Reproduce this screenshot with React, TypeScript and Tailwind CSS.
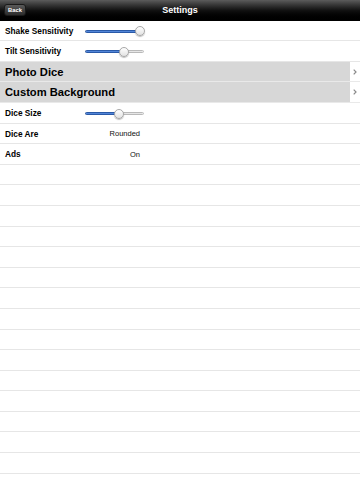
import type { ReactNode } from "react";

const font = { fontFamily: '"Liberation Sans", Arial, sans-serif' };

function Slider({ value }: { value: number }) {
  // value is the thumb centre in px from the track start (track is 59px wide)
  return (
    <div className="relative mt-[1px] h-[10px] w-[59px]">
      <div className="absolute left-0 right-0 top-[3.5px] h-[3px] rounded-full border border-[#b9b9b9] bg-gradient-to-b from-[#f4f4f4] to-[#d8d8d8]" />
      <div
        className="absolute left-0 top-[3.5px] h-[3px] rounded-full border border-[#2a5aa8] bg-gradient-to-b from-[#7ea8e6] to-[#2460c8]"
        style={{ width: value }}
      />
      <div
        className="absolute top-0 h-[10px] w-[10px] rounded-full border border-[#a8a8a8] bg-gradient-to-b from-white to-[#e2e2e2] shadow-[0_1px_1px_rgba(0,0,0,0.25)]"
        style={{ left: value - 5 }}
      />
    </div>
  );
}

function Row({ children }: { children?: ReactNode }) {
  return (
    <div className="flex h-[20.6px] shrink-0 items-center border-b border-[#e6e6e6] pt-[1px]">
      {children}
    </div>
  );
}

function Label({ children }: { children: ReactNode }) {
  return <div className="w-[85px] pl-[5px] text-[8.3px] font-bold text-black">{children}</div>;
}

function Value({ children }: { children: ReactNode }) {
  return <div className="w-[55px] text-right text-[7.5px] text-[#111]">{children}</div>;
}

function LinkRow({ title }: { title: string }) {
  return (
    <div className="flex h-[20.6px] shrink-0 items-stretch border-b border-[#e9e9e9]">
      <div className="flex flex-1 items-center bg-[#d7d7d7] pl-[5px] pt-[1px] text-[11.2px] font-bold text-black">
        {title}
      </div>
      <div className="flex w-[10px] items-center justify-center bg-white">
        <svg width="4" height="6" viewBox="0 0 4 6">
          <polyline points="0.7,0.7 3,3 0.7,5.3" fill="none" stroke="#8a8a8a" strokeWidth="1.2" />
        </svg>
      </div>
    </div>
  );
}

export default function App() {
  const empty = Array.from({ length: 16 });

  return (
    <div className="flex h-[480px] w-[360px] flex-col overflow-hidden bg-white" style={font}>
      {/* Nav bar */}
      <div className="relative flex h-[20.6px] shrink-0 items-center justify-center bg-gradient-to-b from-[#5c5c5c] via-[#111] via-50% to-black">
        <button className="absolute left-[4px] top-[4px] flex h-[12px] w-[22px] items-center justify-center rounded-[3px] border border-[#1a1a1a] bg-gradient-to-b from-[#5a5a5a] to-[#2c2c2c] text-[5.8px] font-bold text-white">
          Back
        </button>
        <span className="text-[9px] font-bold text-white">Settings</span>
      </div>

      <Row>
        <Label>Shake Sensitivity</Label>
        <Slider value={54.5} />
      </Row>
      <Row>
        <Label>Tilt Sensitivity</Label>
        <Slider value={39} />
      </Row>
      <LinkRow title="Photo Dice" />
      <LinkRow title="Custom Background" />
      <Row>
        <Label>Dice Size</Label>
        <Slider value={34} />
      </Row>
      <Row>
        <Label>Dice Are</Label>
        <Value>Rounded</Value>
      </Row>
      <Row>
        <Label>Ads</Label>
        <Value>On</Value>
      </Row>
      {empty.map((_, i) => (
        <Row key={i} />
      ))}
    </div>
  );
}
